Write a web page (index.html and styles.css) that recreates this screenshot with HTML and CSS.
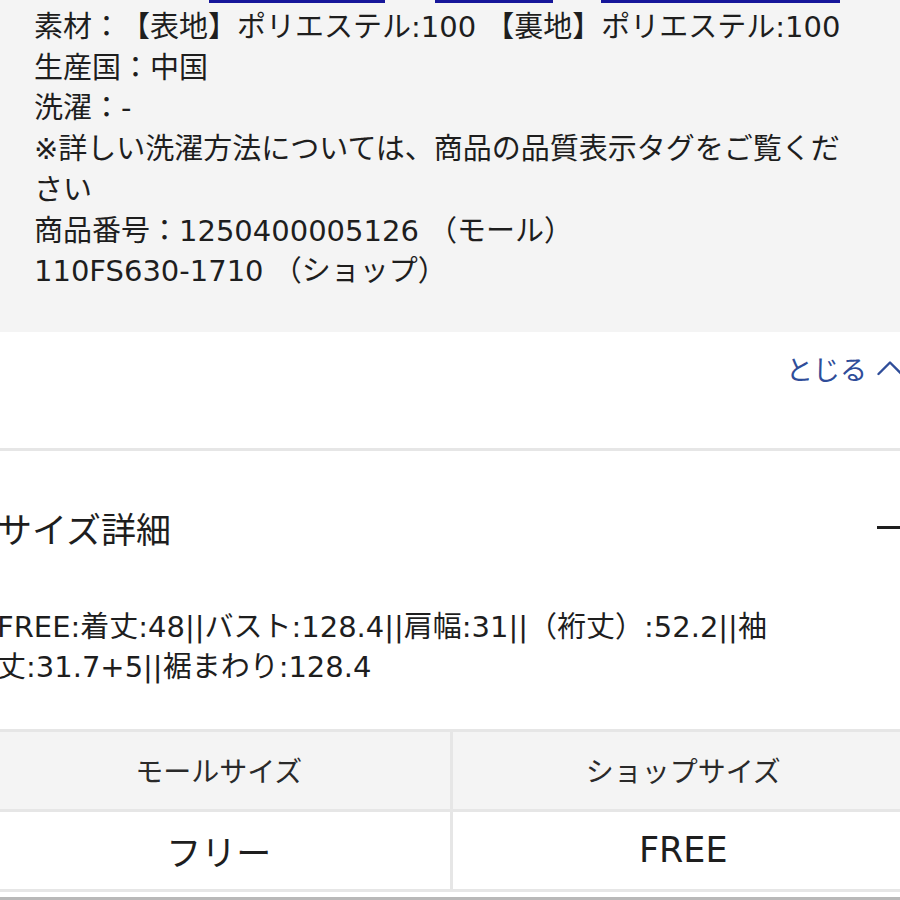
FILE: index.html
```html
<!DOCTYPE html>
<html lang="ja">
<head>
<meta charset="utf-8">
<title>商品詳細</title>
<link rel="stylesheet" href="styles.css">
</head>
<body>
<div class="page">
  <section class="panel">
    <div class="tabs">
      <span class="tab tab-a"></span>
      <span class="tab tab-b"></span>
      <span class="tab tab-c"></span>
    </div>
    <div class="spec">
      <p>素材：【表地】ポリエステル:100 【裏地】ポリエステル:100</p>
      <p>生産国：中国</p>
      <p>洗濯：-</p>
      <p>※詳しい洗濯方法については、商品の品質表示タグをご覧ください</p>
      <p>商品番号：1250400005126 （モール）</p>
      <p>110FS630-1710 （ショップ）</p>
    </div>
  </section>

  <div class="close-row">
    <a class="close-link" href="#">とじる</a>
    <svg class="chev" width="26" height="16" viewBox="0 0 26 16" aria-hidden="true">
      <polyline points="1.5,14 13,2.5 24.5,14" fill="none" stroke="#2f4d99" stroke-width="2.4" stroke-linecap="round" stroke-linejoin="round"/>
    </svg>
  </div>

  <div class="sep"></div>

  <section class="size">
    <div class="size-head">
      <h2 class="size-title">サイズ詳細</h2>
      <span class="minus"></span>
    </div>
    <p class="size-text">FREE:着丈:48||バスト:128.4||肩幅:31||（裄丈）:52.2||袖<br>丈:31.7+5||裾まわり:128.4</p>
    <div class="size-table">
      <div class="cell head">モールサイズ</div>
      <div class="cell head">ショップサイズ</div>
      <div class="cell val">フリー</div>
      <div class="cell val">FREE</div>
    </div>
    <div class="bottom-line"></div>
  </section>
</div>
</body>
</html>
```
FILE: styles.css
```css
html, body {
  margin: 0;
  padding: 0;
  background: #ffffff;
}
body {
  width: 900px;
  height: 900px;
  overflow: hidden;
  font-family: "DejaVu Sans", "Noto Sans CJK JP", sans-serif;
  color: #1e1e1e;
  text-spacing-trim: space-all;
}
.page {
  width: 900px;
}
.panel {
  background: #f4f4f4;
  padding: 0 44px 40px 34px;
}
.tabs {
  display: flex;
  height: 3px;
}
.tab {
  display: block;
  height: 3px;
  background: #16169a;
}
.tab-a { width: 176px; margin-left: 175px; }
.tab-b { width: 118px; margin-left: 50px; }
.tab-c { width: 239px; margin-left: 48px; }
.spec {
  margin-top: 4px;
}
.spec p {
  margin: 0;
  font-size: 29px;
  line-height: 40.7px;
}
.close-row {
  display: flex;
  justify-content: flex-end;
  align-items: center;
  gap: 10px;
  margin: 17px -3px 0 0;
  height: 40px;
}
.close-link {
  font-family: "Noto Sans CJK JP", sans-serif;
  font-size: 27px;
  color: #2f4d99;
  text-decoration: none;
  line-height: 40px;
}
.chev {
  display: block;
  margin-top: -2px;
}
.sep {
  margin-top: 59px;
  height: 3px;
  background: #e6e6e6;
}
.size {
  margin-left: -12px;
  width: 926px;
}
.size-head {
  display: flex;
  justify-content: space-between;
  align-items: center;
  padding: 57px 9px 0 9px;
  height: 40px;
}
.size-title {
  margin: 0;
  font-weight: normal;
  font-size: 35px;
  line-height: 40px;
  font-family: "Noto Sans CJK JP", sans-serif;
}
.minus {
  display: block;
  width: 28px;
  height: 3px;
  background: #1e1e1e;
}
.size-text {
  margin: 59px 0 0 0;
  padding-left: 9px;
  font-size: 29px;
  line-height: 40px;
}
.size-table {
  margin-top: 42px;
  display: grid;
  grid-template-columns: 1fr 1fr;
  gap: 3px;
  background: #e6e6e6;
  border-top: 3px solid #e6e6e6;
  border-bottom: 3px solid #e6e6e6;
}
.cell {
  display: flex;
  align-items: center;
  justify-content: center;
  height: 77px;
}
.cell.head {
  background: #f4f4f4;
  font-size: 28px;
  color: #2a2a2a;
}
.cell.val {
  background: #ffffff;
  font-size: 35px;
}
.bottom-line {
  margin-top: 5px;
  height: 4px;
  background: #b8b8b8;
}
```
